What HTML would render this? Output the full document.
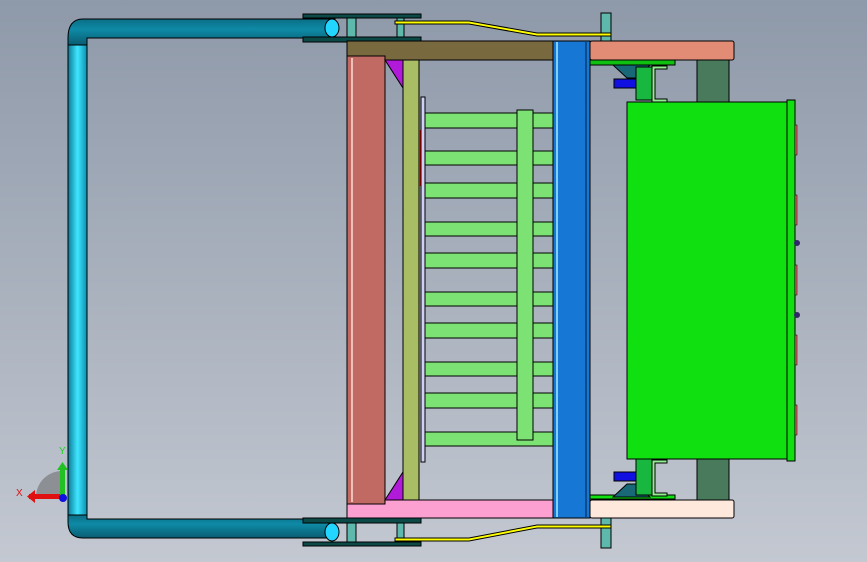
<!DOCTYPE html>
<html><head><style>
html,body{margin:0;padding:0;width:867px;height:562px;overflow:hidden}
body{background:linear-gradient(#8e99a9,#c3c8d1)}
svg{position:absolute;left:0;top:0}
</style></head><body>
<svg width="867" height="562" viewBox="0 0 867 562" xmlns="http://www.w3.org/2000/svg">
<defs>
<linearGradient id="ph" x1="0" y1="0" x2="0" y2="1"><stop offset="0" stop-color="#0b6e86"/><stop offset="0.4" stop-color="#0e8aa6"/><stop offset="1" stop-color="#0a5c70"/></linearGradient>
<linearGradient id="pv" x1="0" y1="0" x2="1" y2="0"><stop offset="0" stop-color="#0a7a96"/><stop offset="0.5" stop-color="#3fe6ff"/><stop offset="1" stop-color="#0a8fb0"/></linearGradient>
</defs>
<g stroke="#000" stroke-width="1">
<!-- pipe -->
<rect x="68" y="45" width="19" height="470" fill="url(#pv)"/>
<path d="M83 19 H335 V38 H87 V45 H68 V38 Q68 19 83 19Z" fill="url(#ph)"/>
<path d="M83 538 H335 V519 H87 V515 H68 V522 Q68 538 83 538Z" fill="url(#ph)"/>
<!-- clamp plates top -->
<rect x="303" y="14" width="118" height="4" fill="#0b4a47"/>
<rect x="303" y="37" width="118" height="5" fill="#0b4a47"/>
<ellipse cx="332" cy="28" rx="7" ry="9" fill="#22d6ff"/>
<rect x="347" y="18" width="9" height="19" fill="#5fb8ac"/>
<rect x="397" y="18" width="7" height="19" fill="#5fb8ac"/>
<!-- clamp bottom -->
<rect x="303" y="518" width="118" height="5" fill="#0b4a47"/>
<rect x="303" y="542" width="118" height="4" fill="#0b4a47"/>
<ellipse cx="332" cy="532" rx="7" ry="9" fill="#22d6ff"/>
<rect x="347" y="523" width="9" height="19" fill="#5fb8ac"/>
<rect x="397" y="523" width="7" height="19" fill="#5fb8ac"/>
<!-- bolts -->
<rect x="601" y="13" width="10" height="28" fill="#5fb8ac"/>
<rect x="601" y="518" width="10" height="30" fill="#5fb8ac"/>
<!-- yellow wires -->
<path d="M395 21 H469 L537 33 H611 V36 H537 L469 24 H395Z" fill="#ffff00"/>
<path d="M395 538 H469 L537 525 H611 V528 H537 L469 541 H395Z" fill="#ffff00"/>
<!-- dark green columns -->
<rect x="697" y="60" width="32" height="42" fill="#4a7a5c"/>
<rect x="697" y="458" width="32" height="42" fill="#4a7a5c"/>
<!-- top frame -->
<rect x="347" y="41" width="208" height="19" fill="#78693f"/>
<rect x="590" y="41" width="144" height="19" rx="2" fill="#e28c76"/>
<!-- bottom frame -->
<rect x="347" y="500" width="208" height="18" fill="#fca0d2"/>
<rect x="590" y="500" width="144" height="18" rx="2" fill="#ffe9dd"/>
<!-- left red column -->
<rect x="347" y="56" width="38" height="448" fill="#c06a63"/>
<line x1="352" y1="58" x2="352" y2="502" stroke="#f0c0b8" stroke-width="2"/>
<!-- purple triangles -->
<path d="M385 60 H403 V88Z" fill="#b01ad8"/>
<path d="M385 500 H403 V472Z" fill="#b01ad8"/>
<!-- olive -->
<rect x="403" y="60" width="16" height="440" fill="#a8bd64"/>
<rect x="419" y="130" width="2" height="56" fill="#e00" stroke="none"/>
<rect x="421" y="97" width="4" height="365" fill="#d0d0f4"/>
<!-- green bars -->
<g fill="#7be273">
<rect x="425" y="113" width="128" height="15"/>
<rect x="425" y="151" width="128" height="14"/>
<rect x="425" y="183" width="128" height="15"/>
<rect x="425" y="222" width="128" height="14"/>
<rect x="425" y="253" width="128" height="15"/>
<rect x="425" y="292" width="128" height="14"/>
<rect x="425" y="323" width="128" height="15"/>
<rect x="425" y="362" width="128" height="14"/>
<rect x="425" y="393" width="128" height="15"/>
<rect x="425" y="432" width="128" height="14"/>
<rect x="517" y="110" width="16" height="330"/>
</g>
<!-- blue column -->
<rect x="553" y="41" width="37" height="477" fill="#1677d4"/>
<line x1="557" y1="42" x2="557" y2="517" stroke="#7fd0ff" stroke-width="2"/>
<line x1="586" y1="42" x2="586" y2="517" stroke="#0c4c8c" stroke-width="2"/>
<!-- right top mounts -->
<rect x="590" y="60" width="85" height="5" fill="#10c010"/>
<path d="M613 65 H650 L636 78 H627Z" fill="#196878"/>
<rect x="614" y="79" width="22" height="9" fill="#1010e0"/>
<path d="M636 67 H652 V100 H636Z" fill="#18b840"/>
<path d="M652 66 H667 V69 H655 V99 H667 V102 H652Z" fill="#90f090"/>
<rect x="590" y="495" width="85" height="4" fill="#10e010"/>
<path d="M613 497 H650 L636 484 H627Z" fill="#196878"/>
<rect x="614" y="472" width="22" height="9" fill="#1010e0"/>
<path d="M636 459 H652 V495 H636Z" fill="#18b840"/>
<path d="M652 460 H667 V463 H655 V493 H667 V496 H652Z" fill="#90f090"/>
<!-- big green box -->
<rect x="627" y="102" width="160" height="357" fill="#10e010"/>
<rect x="787" y="100" width="8" height="361" fill="#10e010"/>
<g fill="#e06060" stroke-width="0.5">
<rect x="795" y="125" width="2" height="30"/><rect x="795" y="195" width="2" height="30"/>
<rect x="795" y="265" width="2" height="30"/><rect x="795" y="335" width="2" height="30"/>
<rect x="795" y="405" width="2" height="30"/>
</g>
<circle cx="797" cy="243" r="3" fill="#302868" stroke="none"/>
<circle cx="797" cy="315" r="3" fill="#302868" stroke="none"/>
</g>
<!-- triad -->
<path d="M36 497 A26 26 0 0 1 62 471 V497Z" fill="#8c8f94"/>
<rect x="29" y="494" width="33" height="5" fill="#e01010"/>
<path d="M27 496.5 L35 490 V503Z" fill="#e01010"/>
<rect x="60" y="470" width="5" height="27" fill="#22c022"/>
<path d="M62.5 462 L57 470 H68Z" fill="#22c022"/>
<circle cx="63" cy="498" r="4" fill="#1010e0"/>
<text x="59" y="454" font-family="Liberation Sans,sans-serif" font-size="10" fill="#22d022">Y</text>
<text x="16" y="496" font-family="Liberation Sans,sans-serif" font-size="10" fill="#e01010">X</text>
</svg>
</body></html>
